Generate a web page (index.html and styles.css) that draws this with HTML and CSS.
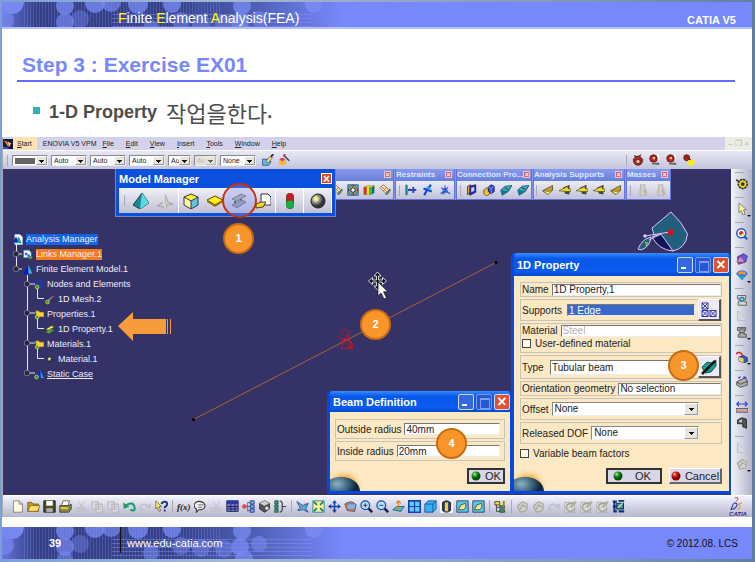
FILE: index.html
```html
<!DOCTYPE html>
<html lang="ko">
<head>
<meta charset="utf-8">
<meta name="viewport" content="width=device-width, initial-scale=1">
<title>Step 3 : Exercise EX01</title>
<link rel="stylesheet" href="styles.css">
</head>
<body>
<svg class="sprite" aria-hidden="true">
  <defs>
    <radialGradient id="gGreen" cx=".35" cy=".3"><stop offset="0" stop-color="#c8f8b0"/><stop offset=".4" stop-color="#28a828"/><stop offset="1" stop-color="#055005"/></radialGradient>
    <radialGradient id="gRed" cx=".35" cy=".3"><stop offset="0" stop-color="#ffd0c0"/><stop offset=".4" stop-color="#e02818"/><stop offset="1" stop-color="#800"/></radialGradient>
    <radialGradient id="gBall" cx=".35" cy=".35"><stop offset="0" stop-color="#ffffb0"/><stop offset=".3" stop-color="#e8e070"/><stop offset=".45" stop-color="#aaa"/><stop offset="1" stop-color="#333"/></radialGradient>
    <radialGradient id="gPlanet" cx=".4" cy=".25"><stop offset="0" stop-color="#8cb4c8"/><stop offset=".5" stop-color="#487088"/><stop offset="1" stop-color="#102838"/></radialGradient>
    <radialGradient id="gGlow"><stop offset=".4" stop-color="#f0a030"/><stop offset="1" stop-color="#fce9c4" stop-opacity="0"/></radialGradient>
    <linearGradient id="gFade"><stop offset="0" stop-color="#6474dc"/><stop offset=".1" stop-color="#343f86"/><stop offset=".5" stop-color="#343f86"/><stop offset=".75" stop-color="#5060b8"/><stop offset="1" stop-color="#7788fb"/></linearGradient>
    <pattern id="pLines" width="6" height="6" patternUnits="userSpaceOnUse"><path d="M1.500 0V6M4.500 0V6" stroke="#8c9aff" stroke-opacity=".25" fill="none"/></pattern>
    <pattern id="pRows" width="6" height="4" patternUnits="userSpaceOnUse"><path d="M0 .5H6" stroke="#8c9aff" stroke-opacity=".4" fill="none"/></pattern>
  </defs>
  <symbol id="dots" viewBox="0 0 340 32" preserveAspectRatio="xMinYMin slice">
    <rect width="340" height="32" fill="url(#gFade)"/>
    <rect x="20" width="200" height="32" fill="url(#pLines)"/>
    <rect x="110" y="12" width="200" height="20" fill="url(#pRows)"/>
    <g fill="#7788f0">
      <circle cx="10" cy="0" r="12"/><circle cx="2" cy="18" r="10" opacity=".7"/><circle cx="63" cy="4" r="9" opacity=".8"/><circle cx="63" cy="20" r="9" opacity=".7"/><circle cx="63" cy="32" r="8" opacity=".6"/><circle cx="78" cy="17" r="9" opacity=".4"/>
      <circle cx="93" cy="1" r="10" opacity=".8"/><circle cx="109" cy="0" r="10" opacity=".7"/><circle cx="136" cy="2" r="10" opacity=".8"/><circle cx="149" cy="26" r="8" opacity=".6"/><circle cx="170" cy="2" r="9" opacity=".8"/><circle cx="179" cy="19" r="9" opacity=".5"/><circle cx="199" cy="21" r="9" opacity=".5"/><circle cx="222" cy="22" r="9" opacity=".5"/>
      <circle cx="240" cy="4" r="9" opacity=".8"/><circle cx="238" cy="20" r="9" opacity=".8"/><circle cx="242" cy="32" r="9" opacity=".8"/><circle cx="257" cy="17" r="8" opacity=".6"/><circle cx="312" cy="2" r="9"/>
    </g>
  </symbol>
  <symbol id="i-app" viewBox="0 0 16 16"><path fill="#101840" d="M0 0h16v16H0z"/><path d="M1 2l8 3 2 8-4-2z" fill="#f07030"/><path d="M8 4l5 3-3 5z" fill="#ffd860"/><path d="M0 12l7 1 3 3H0z" fill="#2858c0"/></symbol>
  <symbol id="i-pyr" viewBox="0 0 16 16"><path d="M9 0L0 12l7 4 9-6z" fill="#188898" stroke="#123" stroke-width=".8"/><path d="M9 0l-2 16 9-6z" fill="#60d8e0"/></symbol>
  <symbol id="i-pyrg" viewBox="0 0 16 16"><path d="M8 1L6 9 0 13l6 1 3 2 1-4 6-1-5-2z" fill="#c8c8c4" stroke="#999" stroke-width=".8"/><path d="M8 1l-2 8 3 7" stroke="#eee" fill="none"/></symbol>
  <symbol id="i-cube" viewBox="0 0 16 16"><path d="M8 1l7 3-7 4-7-4z" fill="#ffee30"/><path d="M1 4l7 4v8l-7-4z" fill="#fff8a0"/><path d="M15 4l-7 4v8l7-4z" fill="#58c8e0"/><path d="M8 1l7 3v8l-7 4-7-4V4zM1 4l7 4 7-4M8 8v8" fill="none" stroke="#224" stroke-width=".9"/></symbol>
  <symbol id="i-shell" viewBox="0 0 16 16"><path d="M8 3l8 4-8 5-8-5z" fill="#ffee20" stroke="#554400"/><path d="M0 7l8 5 8-5v2l-8 5-8-5z" fill="#907010"/></symbol>
  <symbol id="i-beam" viewBox="0 0 16 16"><path d="M1 6l9-5 5 2-9 5z" fill="#a9b48c" stroke="#556" stroke-width=".7"/><path d="M4 8v4M10 6v3" stroke="#446" stroke-width="2"/><path d="M1 12l9-5 5 2-9 6z" fill="#8aa4a8" stroke="#556" stroke-width=".7"/></symbol>
  <symbol id="i-beamy" viewBox="0 0 16 16"><path d="M1 8l9-6 5 2-9 5z" fill="#f8e840" stroke="#442" stroke-width=".7"/><path d="M1 12l9-5 5 2-9 6z" fill="#48a848" stroke="#242" stroke-width=".7"/><path d="M5 9v3" stroke="#aa8"/></symbol>
  <symbol id="i-solid" viewBox="0 0 16 16"><path d="M6 1h7l3 3v8H6z" fill="#fff" stroke="#334"/><path d="M1 11l5-2h5l-3 5-7 1z" fill="#f8d820" stroke="#442"/></symbol>
  <symbol id="i-light" viewBox="0 0 16 16"><rect x="4" width="8" height="16" rx="4" fill="#363"/><circle cx="8" cy="4" r="3.800" fill="#d01820"/><circle cx="8" cy="11.500" r="3.800" fill="#18b040"/></symbol>
  <symbol id="i-ball" viewBox="0 0 16 16"><circle cx="8" cy="8" r="7" fill="url(#gBall)" stroke="#222"/></symbol>
  <symbol id="i-flower" viewBox="0 0 16 16"><path d="M1 1h14v14H1z" fill="#48b8c8" stroke="#247"/><circle cx="8" cy="8" r="6" fill="#f8a048" stroke="#246"/><circle cx="8" cy="8" r="3" fill="#fff" stroke="#246" stroke-width="1.500"/><path d="M8 1v4M8 11v4M1 8h4M11 8h4" stroke="#246"/></symbol>
  <symbol id="i-rain" viewBox="0 0 16 16"><path d="M1 4l4-2h10v9l-3 3H1z" fill="#1a8030"/><path d="M1 4h4v10H1z" fill="#e03020"/><path d="M5 4h3v10H5z" fill="#f8e020"/><path d="M8 4h4v10H8z" fill="#30c050"/><path d="M12 4l3-2v9l-3 3z" fill="#167"/><path d="M1 4l4-2h10l-3 2z" fill="#f8c040"/></symbol>
  <symbol id="i-net" viewBox="0 0 16 16"><path d="M1 5l5-4 9 9-4 4zM3 3l10 10M6 9l5-5" fill="#f8e8b0" stroke="#a06020"/><path d="M9 14l6-7" stroke="#268" stroke-width="2"/></symbol>
  <symbol id="i-clamp" viewBox="0 0 16 16"><path d="M2 1v14" stroke="#188" stroke-width="3"/><path d="M4 8h11M11 4v8" stroke="#1848d8" stroke-width="2.500"/><path d="M6 6l5 4" stroke="#c22"/></symbol>
  <symbol id="i-pin" viewBox="0 0 16 16"><path d="M3 15l4-8 5-6M2 6l11 4" stroke="#1848e0" stroke-width="3" fill="none"/><path d="M6 4l6 3" stroke="#4bd" stroke-width="2"/></symbol>
  <symbol id="i-axes" viewBox="0 0 16 16"><path d="M8 2v7l-6 4M8 9l7 4M3 5l9 6M12 4L5 14" stroke="#2050e0" stroke-width="1.500" fill="none"/><circle cx="8" cy="9" r="3" fill="none" stroke="#2050e0"/></symbol>
  <symbol id="i-conn" viewBox="0 0 16 16"><path d="M2 3l4-2v10l-4 3z" fill="#f8a830" stroke="#223"/><path d="M5 3l8-2v10l-8 4z" fill="#2030c8" stroke="#114"/><path d="M7 5l4-1v5l-4 2z" fill="#d8d8f8"/></symbol>
  <symbol id="i-conn2" viewBox="0 0 16 16"><path d="M1 8l4-3 4 2v6l-4 3-4-3z" fill="#f8c030" stroke="#442"/><path d="M7 4l4-3 4 2v7l-4 3-4-3z" fill="#3048d0" stroke="#114"/><path d="M7 4l4 2 4-3M11 6v7" stroke="#9af" fill="none"/></symbol>
  <symbol id="i-teal" viewBox="0 0 16 16"><path d="M1 8l6-5 9-1-5 8-8 5z" fill="#30b8d0" stroke="#145"/><path d="M1 8l9 1 6-7-5 8-8 5z" fill="#137890"/><path d="M6 5l5 2" stroke="#823" stroke-width="1.500"/></symbol>
  <symbol id="i-wedge" viewBox="0 0 16 16"><path d="M1 9l13-7v6l-6 6z" fill="#c8a020" stroke="#442"/><path d="M1 9l8 1 5-2-6 6z" fill="#fff080" stroke="#442" stroke-width=".7"/></symbol>
  <symbol id="i-wedgek" viewBox="0 0 16 16"><path d="M5 5l9-4v13l-6-1z" fill="#444"/><path d="M0 9l12-6v3l4 1v3H8z" fill="#f0d828" stroke="#442" stroke-width=".8"/></symbol>
  <symbol id="i-mass" viewBox="0 0 16 16"><path d="M5 4a3 3 0 1 1 5 0l2 4v7H4V8z" fill="#d0cfc8" stroke="#aaa79c"/><path d="M9 8l4 6" stroke="#b5b2a6" stroke-width="2"/></symbol>
  <symbol id="i-brush" viewBox="0 0 16 16"><path d="M0 7h8l4 3-3 5H1z" fill="#60b8f0" stroke="#247"/><path d="M5 10l6-7 3 2-6 7z" fill="#f8e070" stroke="#333" stroke-width=".7"/><path d="M12 4l3-4" stroke="#226" stroke-width="2.500"/></symbol>
  <symbol id="i-wand" viewBox="0 0 16 16"><circle cx="6" cy="10" r="5" fill="#f8b830"/><path d="M2 7a5 5 0 0 1 7 0l-3 3z" fill="#c83898"/><path d="M8 2l7 7" stroke="#346" stroke-width="2"/><path d="M7 3l3-3" stroke="#e22" stroke-width="2"/></symbol>
  <symbol id="i-bug" viewBox="0 0 16 16"><path d="M3 2l4 3 5-4M1 8h14" stroke="#623" stroke-width="1.500" fill="none"/><circle cx="8" cy="9" r="6" fill="#b82818" stroke="#411"/><circle cx="8" cy="10" r="3" fill="#f0b0a0" stroke="#411"/></symbol>
  <symbol id="i-bugs" viewBox="0 0 16 16"><path d="M2 1h11v7H2z" fill="#fff"/><circle cx="6" cy="6" r="5" fill="#b82818" stroke="#411"/><path d="M5 4h3v3H5z" fill="#f0c0a0"/><path d="M4 13l9-1v2z" stroke="#555" fill="#777"/></symbol>
  <symbol id="i-bugy" viewBox="0 0 16 16"><circle cx="5" cy="5" r="4" fill="#b82818" stroke="#411"/><path d="M7 8h8v7H7z" fill="#f8f010"/><path d="M1 2l10 6" stroke="#411"/></symbol>
  <symbol id="i-gear" viewBox="0 0 16 16"><circle cx="9" cy="8" r="6" fill="#e8d820" stroke="#222" stroke-width="2" stroke-dasharray="3 1"/><circle cx="9" cy="8" r="2.500" fill="#333"/><path d="M0 2l4 3" stroke="#222" stroke-width="2"/></symbol>
  <symbol id="i-cur" viewBox="0 0 16 16"><path d="M4 0v13l3-3 2 6 3-1-2-6h4z" fill="#fff8a0" stroke="#555" stroke-width=".9"/></symbol>
  <symbol id="i-zoomc" viewBox="0 0 16 16"><path d="M10 10l5 5" stroke="#1858c8" stroke-width="3"/><circle cx="7" cy="7" r="6" fill="#fff" stroke="#1858c8" stroke-width="2"/><circle cx="7" cy="7" r="3" fill="#e02828"/><path d="M6 9l4-3v4z" fill="#fd0"/></symbol>
  <symbol id="i-purple" viewBox="0 0 16 16"><path d="M2 5l8-4 5 3-2 8-10 3z" fill="#6858d8" stroke="#238"/><path d="M1 12l5-7 6 7z" fill="#b0a0f0" stroke="#d33"/></symbol>
  <symbol id="i-fan" viewBox="0 0 16 16"><path d="M0 6q8-9 16 0l-8 9z" fill="#2870e0"/><path d="M2 6q6-6 12 0l-3 2q-3-3-6 0z" fill="#f89830"/><path d="M4 9h8l-4 6z" fill="#20a8b8"/></symbol>
  <symbol id="i-scroll" viewBox="0 0 16 16"><path d="M2 2h11v4h-2v5h3v4H3v-4h2V6H2z" fill="#a8a8a8" stroke="#444"/><path d="M5 4h7M5 9h6" stroke="#333"/></symbol>
  <symbol id="i-scrollb" viewBox="0 0 16 16"><path d="M2 2h11v4h-1v5h2v4H3v-4h1V6H2z" fill="#d8d8c0" stroke="#444"/><circle cx="8" cy="7" r="3.500" fill="#2878d0"/><path d="M8 5l2 3H6z" fill="#cf4"/></symbol>
  <symbol id="i-tri" viewBox="0 0 16 16"><path d="M2 1v13h13z" fill="#d8d8e0" stroke="#b8b8b8"/></symbol>
  <symbol id="i-boxr" viewBox="0 0 16 16"><path d="M0 4q5-5 9 2" stroke="#d02020" stroke-width="2" fill="none"/><path d="M4 8l6-2 5 3v5l-5 2-6-3z" fill="#3858c8" stroke="#124"/><path d="M4 8l6 2v6l-6-3z" fill="#f8d840"/></symbol>
  <symbol id="i-print2" viewBox="0 0 16 16"><path d="M4 6l7-3 4 3v6l-9 3-5-3V8z" fill="#b0b0b0" stroke="#333"/><path d="M1 8l5 3 9-4" stroke="#333" fill="none"/><path d="M3 3l3-2M10 1l4 2" stroke="#24d" stroke-width="2"/></symbol>
  <symbol id="i-meas" viewBox="0 0 16 16"><path d="M1 4h14M4 1L1 4l3 3M12 1l3 3-3 3" stroke="#2048d0" stroke-width="1.500" fill="none"/><path d="M0 10h16v5H0z" fill="#e8a070" stroke="#2848a8"/></symbol>
  <symbol id="i-meas2" viewBox="0 0 16 16"><path d="M2 4l6-3 6 2v12l-5-2V9H2z" fill="#555" stroke="#111"/><path d="M4 5l4-2v4H4z" fill="#bcd"/></symbol>
  <symbol id="i-new" viewBox="0 0 16 16"><path d="M3 1h7l4 4v10H3z" fill="#fffbe0" stroke="#777"/><path d="M10 1v4h4" fill="none" stroke="#777"/></symbol>
  <symbol id="i-open" viewBox="0 0 16 16"><path d="M1 14V3h5l1 2h7v9z" fill="#c89820" stroke="#653"/><path d="M1 14l3-7h12l-3 7z" fill="#ffe060" stroke="#653" stroke-width=".8"/></symbol>
  <symbol id="i-save" viewBox="0 0 16 16"><path d="M1 1h14v14H1z" fill="#444d22" stroke="#111"/><path d="M4 1h8v6H4z" fill="#fff"/><path d="M4 10h8v5H4z" fill="#aaa"/></symbol>
  <symbol id="i-prt" viewBox="0 0 16 16"><path d="M5 1h8l-2 6H3z" fill="#fff" stroke="#555"/><path d="M1 7h11l3-2v6l-3 4H1z" fill="#888850" stroke="#333"/><path d="M2 10h9" stroke="#fd0" stroke-width="2"/></symbol>
  <symbol id="i-cut" viewBox="0 0 16 16"><path d="M4 1l6 10M12 1L5 11" stroke="#bab9bc"/><circle cx="4" cy="12" r="2.500" stroke="#bab9bc" fill="none"/><circle cx="11" cy="12" r="2.500" stroke="#bab9bc" fill="none"/></symbol>
  <symbol id="i-copy" viewBox="0 0 16 16"><path d="M1 2h8v9H1zM6 5h8v10H6z" fill="#d8d8dc" stroke="#b0b0b4"/><path d="M8 8h4M8 11h4" stroke="#b0b0b4"/></symbol>
  <symbol id="i-undo" viewBox="0 0 16 16"><path d="M3 7q9-6 11 1t-5 4" fill="none" stroke="#18a068" stroke-width="2.500"/><path d="M0 3l1 8 7-3z" fill="#18a068"/></symbol>
  <symbol id="i-redo" viewBox="0 0 16 16"><path d="M13 8Q5 2 2 8t4 4" fill="none" stroke="#c0c0c6" stroke-width="2"/><path d="M15 4l-1 7-6-3z" fill="#c0c0c6"/></symbol>
  <symbol id="i-what" viewBox="0 0 16 16"><path d="M1 1v10l2-2 2 5 2-1-2-5h3z" fill="#ffe860" stroke="#333" stroke-width=".7"/><path d="M8 5q1-3 4-3t3 3q0 2-3 4v1M12 12v2" fill="none" stroke="#123078" stroke-width="2.200"/></symbol>
  <symbol id="i-talk" viewBox="0 0 16 16"><path d="M8 2a6.500 5 0 1 1-2 10l-3 3V11A6 5 0 0 1 8 2z" fill="#eee" stroke="#333" stroke-width="1.300"/><path d="M5 6h7M5 9h5" stroke="#555"/></symbol>
  <symbol id="i-tab" viewBox="0 0 16 16"><path d="M1 1h14v13H1z" fill="#7880c0" stroke="#115"/><path d="M1 1h14v4H1z" fill="#2838a8"/><path d="M1 8h14M1 11h14M6 5v9M11 5v9" stroke="#115"/></symbol>
  <symbol id="i-tree" viewBox="0 0 16 16"><path d="M2 8h5M7 3v11M7 3h4M7 8h4M7 13h4" stroke="#555" fill="none"/><circle cx="3" cy="8" r="2.800" fill="#e04858"/><path d="M10 1h5v4h-5zM10 6h5v4h-5zM10 11h5v4h-5z" fill="#68a8f8" stroke="#238"/></symbol>
  <symbol id="i-dice" viewBox="0 0 16 16"><path d="M8 1l6 3v7l-6 4-6-4V4z" fill="#555" stroke="#222"/><path d="M8 1l6 3-6 3-6-3z" fill="#ccc"/><circle cx="11" cy="10" r="2" fill="#ddd"/></symbol>
  <symbol id="i-struct" viewBox="0 0 16 16"><path d="M1 1h4v4H1zM1 6h4v4H1zM1 11h4v4H1z" fill="#38a868" stroke="#244"/><path d="M7 1q4 0 3 7 1 7-3 7M10 8h5" stroke="#445" fill="none" stroke-width="1.500"/></symbol>
  <symbol id="i-fly" viewBox="0 0 16 16"><path d="M1 2l8 5 6-3-3 7 3 4-6-3-7 1 3-4z" fill="#50b8d0" stroke="#1848a0"/><path d="M3 12l9-8" stroke="#d44"/></symbol>
  <symbol id="i-fit" viewBox="0 0 16 16"><path d="M1 1h14v14H1z" fill="#f4f090" stroke="#188"/><path d="M2 2l4 4M14 2l-4 4M2 14l4-4M14 14l-4-4" stroke="#187878" stroke-width="2"/></symbol>
  <symbol id="i-pan" viewBox="0 0 16 16"><path d="M8 0l3 4H9v3h3V5l4 3-4 3V9H9v3h2l-3 4-3-4h2V9H4v2L0 8l4-3v2h3V4H5z" fill="#1848a8"/></symbol>
  <symbol id="i-rot" viewBox="0 0 16 16"><path d="M1 5q8-6 14 1l-2 8-9-1z" fill="#78b8e8" stroke="#248"/><path d="M14 10a6 4 0 1 1-2-5" fill="none" stroke="#d06838" stroke-width="2"/></symbol>
  <symbol id="i-zin" viewBox="0 0 16 16"><path d="M10 10l5 5" stroke="#124" stroke-width="3"/><circle cx="6.500" cy="6.500" r="5.300" fill="#b8e0ff" stroke="#1848a8" stroke-width="1.500"/><path d="M4 6.500h5M6.500 4v5" stroke="#124"/></symbol>
  <symbol id="i-zout" viewBox="0 0 16 16"><path d="M10 10l5 5" stroke="#124" stroke-width="3"/><circle cx="6.500" cy="6.500" r="5.300" fill="#b8e0ff" stroke="#1848a8" stroke-width="1.500"/><path d="M4 6.500h5" stroke="#124"/></symbol>
  <symbol id="i-norm" viewBox="0 0 16 16"><path d="M1 12l5-4h9l-4 6z" fill="#58b8c8" stroke="#156"/><path d="M8 11V2M5 4l3-3 3 3" stroke="#c83" stroke-width="1.500" fill="none"/></symbol>
  <symbol id="i-multi" viewBox="0 0 16 16"><path d="M1 1h14v14H1z" fill="#58d0f8" stroke="#1840b0" stroke-width="2"/><path d="M8 1v14M1 8h14" stroke="#1840b0" stroke-width="1.500"/></symbol>
  <symbol id="i-iso" viewBox="0 0 16 16"><path d="M1 5l4-4h10v10l-4 4H1z" fill="#38b0f0" stroke="#1050a8"/><path d="M1 5h10v10M11 5l4-4" stroke="#1050a8" fill="none"/></symbol>
  <symbol id="i-cyl" viewBox="0 0 16 16"><rect width="16" height="16" rx="2" fill="#f8f8f8"/><path d="M3 3q5-4 10 0v10q-5 4-10 0z" fill="#283878" stroke="#112"/><path d="M6 3h4v11H6z" fill="#f8d020"/></symbol>
  <symbol id="i-view" viewBox="0 0 16 16"><path d="M1 1h14v14H1z" fill="#58c8e8" stroke="#236"/><path d="M3 12l3-6 6-2v5l-3 3z" fill="#f0e890" stroke="#442"/></symbol>
  <symbol id="i-cat" viewBox="0 0 16 16"><path d="M1 2h6v4H1z" fill="#f8e030" stroke="#333"/><path d="M3 6v8h4M3 9h4" fill="none" stroke="#333"/><path d="M7 7h6v3H7zM7 12h6v3H7z" fill="#38a868" stroke="#333"/><path d="M12 1v8" stroke="#a80" stroke-width="2.500"/></symbol>
  <symbol id="i-off" viewBox="0 0 16 16"><path d="M2 7l6-5 6 3-1 8-8 2z" fill="#d2d2cc" stroke="#aaa89c" stroke-width="1.500"/><path d="M5 12l3-6 5 3" fill="none" stroke="#aaa89c" stroke-width="1.500"/></symbol>
  <symbol id="i-offa" viewBox="0 0 16 16"><path d="M1 3h12v12H1z" fill="#d8d8d4" stroke="#b0aea4"/><path d="M12 6a5 5 0 1 0 1 4M8 9l7-7" fill="none" stroke="#a9a79c" stroke-width="2"/></symbol>
  <symbol id="i-end" viewBox="0 0 16 16"><path d="M1 2h5M1 8h5M3 2v12h3M8 1h7M8 14h7" stroke="#123078" stroke-width="2.500" fill="none"/><path d="M6 4h8v7H6z" fill="#38a8b0" stroke="#112a70" stroke-width="1.500"/><path d="M7 10l6-6" stroke="#e8e060" stroke-width="1.500"/></symbol>
  <symbol id="i-folder" viewBox="0 0 16 16"><path d="M2 2h6l1 2h7v8H4z" fill="#f8d030" stroke="#553"/><circle cx="5" cy="12" r="3" fill="#6c8c20" stroke="#cf6"/></symbol>
  <symbol id="i-link" viewBox="0 0 16 16"><path d="M1 1h9l3 4v8H1z" fill="#fff" stroke="#28a"/><path d="M3 5h4v4H3zM7 8h4v4H7z" fill="#2870c8"/><circle cx="12" cy="13" r="2.500" fill="#5a9828"/></symbol>
  <symbol id="i-doc" viewBox="0 0 16 16"><path d="M3 0h8l4 4v12H3z" fill="#fff" stroke="#bdf"/><path d="M9 3L2 14h12z" fill="#20a0a8"/><path d="M5 3L0 12h8z" fill="#1020d0"/></symbol>
  <symbol id="i-fem" viewBox="0 0 16 16"><path d="M8 0L1 15h8z" fill="#0818e0"/><path d="M8 0l7 14-6 1z" fill="#28b8d8"/></symbol>
  <symbol id="i-nodes" viewBox="0 0 16 16"><path d="M1 2l5 2 5-3 4 4-5 3 4 6-8-2z" fill="none" stroke="#1838e0" stroke-width="2" stroke-dasharray="2 1"/><circle cx="5" cy="12" r="3" fill="#5a8820" stroke="#cf6"/></symbol>
  <symbol id="i-mesh" viewBox="0 0 16 16"><path d="M3 13L14 2" stroke="#d84040" stroke-width="2"/><path d="M5 9l6-5" stroke="#48f" stroke-width="2"/><circle cx="4" cy="12" r="3" fill="#5a8820" stroke="#cf6"/></symbol>
  <symbol id="i-static" viewBox="0 0 16 16"><path d="M10 1L3 14h13z" fill="#1028d0"/><path d="M10 1l6 13h-5z" fill="#2898c8"/><circle cx="4" cy="12" r="3" fill="#5a8820" stroke="#cf6"/></symbol>
  <symbol id="i-net3" viewBox="0 0 16 16"><path d="M1 1h6v6H1zM1 8.500h6v6H1zM9 8.500h6v6H9zM1 1l6 6M7 1L1 7M1 8.500l6 6M7 8.500l-6 6M9 8.500l6 6M15 8.500l-6 6" fill="none" stroke="#2020a0" stroke-width=".9"/></symbol>
  <symbol id="i-sect" viewBox="0 0 16 16"><path d="M1 8l5-5 5 1 4-3v6l-5 6-6 1z" fill="#18a090" stroke="#023" stroke-width=".7"/><path d="M1 15L14 2" stroke="#111" stroke-width="2.500"/></symbol>
</svg>

<header class="banner">
  <svg class="texture" aria-hidden="true"><use href="#dots"/></svg>
  <p class="course"><b>F</b>inite <b>E</b>lement <b>A</b>nalysis(FEA)</p>
  <p class="product">CATIA V5</p>
</header>

<main>
  <section class="lesson">
    <h1>Step 3 : Exercise EX01</h1>
    <ul class="points"><li>1-D Property <span>작업을한다</span>.</li></ul>
  </section>

  <section class="app">
    <nav class="menubar">
      <svg class="appicon" aria-hidden="true"><use href="#i-app"/></svg>
      <a class="start" href="#"><u>S</u>tart</a><a href="#">ENOVIA V5 VPM</a><a href="#"><u>F</u>ile</a><a href="#"><u>E</u>dit</a><a href="#"><u>V</u>iew</a><a href="#"><u>I</u>nsert</a><a href="#"><u>T</u>ools</a><a href="#"><u>W</u>indow</a><a href="#"><u>H</u>elp</a>
      <span class="mdi">– ❐ ×</span>
    </nav>
    <div class="optbar">
      <i class="grip"></i>
      <label class="combo wide swatch"><select aria-label="Color"><option></option></select></label>
      <label class="combo wide"><select aria-label="Transparency"><option>Auto</option></select></label>
      <label class="combo wide"><select aria-label="Line weight"><option>Auto</option></select></label>
      <label class="combo wide"><select aria-label="Line type"><option>Auto</option></select></label>
      <label class="combo narrow"><select aria-label="Point"><option>Aut</option></select></label>
      <label class="combo narrow off"><select aria-label="Rendering" disabled><option>Aut</option></select></label>
      <label class="combo wide"><select aria-label="Layer"><option>None</option></select></label>
      <span class="tools"><svg><use href="#i-brush"/></svg><svg><use href="#i-wand"/></svg></span>
      <span class="tools far"><i class="grip"></i><svg><use href="#i-bug"/></svg><svg><use href="#i-bugs"/></svg><svg><use href="#i-bugs"/></svg><svg><use href="#i-bugy"/></svg></span>
    </div>

    <div class="work">
      <div class="view">
        <svg class="scene" viewBox="3 169 729 326" aria-hidden="true">
          <path d="M193.500 419.500L496 262.500" stroke="#b0602e" stroke-width="1"/>
          <circle cx="193.500" cy="419.500" r="1.500"/><circle cx="496" cy="262.500" r="1.500"/>
          <path d="M340 333a5 5 0 1 1 7 6M338 336l14 13M341 349l6-15 6 13zM352 351v-8l-10-5M341 343a5 5 0 1 1 6 6" fill="none" stroke="#e01018" stroke-width=".8"/>
          <path d="M671 212Q682 222 687.500 234Q686 248 673 251Q655 246 652 228Z" fill="#235f7c" stroke="#d8c8ff" stroke-width="1"/>
          <path d="M661 234L673 251Q659 250 652 237Z" fill="#141458" stroke="#d8c8ff" stroke-width="1"/>
          <path d="M638 249Q642 239 651 237Q650 247 641 250Z" fill="#235f7c" stroke="#d8c8ff"/><path d="M645 236l25-4M661 234l-12 6" stroke="#d8c8ff"/><circle cx="645" cy="236" r="1.800" fill="#d8c8ff"/><path d="M668 230h5v5h-5z" fill="#d81010"/><path d="M645 243q4-2 1 3" stroke="#dd3" fill="none"/>
          <path d="M16.500 240V269M16 254h6M16 269h6M27.500 275V373M27 284h8M27 313h8M27 343h8M27 373h8M37.500 288V298.500H44M37.500 318V328.500H44M37.500 348V358.500H44" stroke="#e8e8f4" fill="none"/>
          <g fill="#26263a" stroke="#889" stroke-width=".8"><circle cx="16" cy="254" r="2.800"/><circle cx="16" cy="269" r="2.800"/><circle cx="27" cy="284" r="2.800"/><circle cx="27" cy="313" r="2.800"/><circle cx="27" cy="343" r="2.800"/><circle cx="27" cy="373" r="2.800"/></g>
          <path d="M118 326l15-14v7h33v15h-33v7z" fill="#f79c3a"/><path d="M167.500 319v15M170.500 319v15" stroke="#f79c3a" stroke-width="1"/>
          <g fill="#111" stroke="#fff" stroke-width=".8"><path d="M377.500 272l3.500 4h-2.500v4h4v-2.500l4 3.500-4 3.500v-2.500h-4v4h2.500l-3.500 4-3.500-4h2.500v-4h-4v2.500l-4-3.500 4-3.500v2.500h4v-4h-2.500z"/></g>
          <path d="M378 282v14l3-3 3 6 2.500-1.200-3-6h4.500z" fill="#fff" stroke="#111" stroke-width=".7"/>
        </svg>

        <ul class="tree">
          <li class="l0"><svg><use href="#i-doc"/></svg><span class="sel">Analysis Manager</span></li>
          <li class="l1"><svg><use href="#i-link"/></svg><span class="hot">Links Manager.1</span></li>
          <li class="l1"><svg><use href="#i-fem"/></svg><span>Finite Element Model.1</span></li>
          <li class="l2"><svg><use href="#i-nodes"/></svg><span>Nodes and Elements</span></li>
          <li class="l3"><svg><use href="#i-mesh"/></svg><span>1D Mesh.2</span></li>
          <li class="l2"><svg><use href="#i-folder"/></svg><span>Properties.1</span></li>
          <li class="l3"><svg><use href="#i-beamy"/></svg><span>1D Property.1</span></li>
          <li class="l2"><svg><use href="#i-folder"/></svg><span>Materials.1</span></li>
          <li class="l3"><svg class="small"><use href="#i-ball"/></svg><span>Material.1</span></li>
          <li class="l2"><svg><use href="#i-static"/></svg><span><u>Static Case</u></span></li>
        </ul>

        <div class="palettes">
          <section class="palette p-first"><h2><button aria-label="Close">×</button></h2><div><svg><use href="#i-net"/></svg><svg><use href="#i-flower"/></svg><svg><use href="#i-rain"/></svg><svg><use href="#i-net"/></svg></div></section>
          <section class="palette p-rest"><h2><span>Restraints</span><button aria-label="Close">×</button></h2><div><i class="grip"></i><svg><use href="#i-clamp"/></svg><svg><use href="#i-pin"/></svg><svg><use href="#i-axes"/></svg></div></section>
          <section class="palette p-conn"><h2><span>Connection Pro...</span><button aria-label="Close">×</button></h2><div><i class="grip"></i><svg><use href="#i-conn"/></svg><svg><use href="#i-conn2"/></svg><svg><use href="#i-teal"/></svg><svg><use href="#i-teal"/></svg></div></section>
          <section class="palette p-supp"><h2><span>Analysis Supports</span><button aria-label="Close">×</button></h2><div><i class="grip"></i><svg><use href="#i-wedge"/></svg><svg><use href="#i-wedgek"/></svg><svg><use href="#i-wedgek"/></svg><svg><use href="#i-wedgek"/></svg><svg><use href="#i-wedge"/></svg></div></section>
          <section class="palette p-mass"><h2><span>Masses</span><button aria-label="Close">×</button></h2><div><i class="grip"></i><svg><use href="#i-mass"/></svg><svg><use href="#i-mass"/></svg></div></section>
        </div>

        <section class="manager">
          <h2><span>Model Manager</span><button class="x" aria-label="Close">×</button></h2>
          <div class="mtools">
            <span class="c1"><i class="grip"></i><svg><use href="#i-pyr"/></svg><svg><use href="#i-pyrg"/></svg></span>
            <span class="c2"><svg><use href="#i-cube"/></svg><svg><use href="#i-shell"/></svg><svg><use href="#i-beam"/></svg><svg><use href="#i-solid"/></svg></span>
            <span class="c3"><svg><use href="#i-light"/></svg></span>
            <span class="c3"><svg><use href="#i-ball"/></svg></span>
          </div>
          <i class="ring"></i>
        </section>

        <form class="dialog beam">
          <h2><span>Beam Definition</span><button type="button" aria-label="Minimize" class="min"></button><button type="button" aria-label="Maximize" class="max"></button><button type="button" class="x" aria-label="Close">×</button></h2>
          <div class="body">
            <svg class="planet" viewBox="0 0 34 24" aria-hidden="true"><ellipse cx="14" cy="18" rx="20" ry="17" fill="url(#gGlow)"/><ellipse cx="11" cy="24" rx="19" ry="14" fill="url(#gPlanet)"/></svg>
            <p class="row"><label for="or">Outside radius</label><input id="or" value="40mm"></p>
            <p class="row"><label for="ir">Inside radius</label><input id="ir" value="20mm"></p>
            <p class="actions"><button type="button" class="ok slim"><svg viewBox="0 0 10 10"><circle cx="5" cy="5" r="4.500" fill="url(#gGreen)"/></svg>OK</button></p>
          </div>
        </form>

        <form class="dialog prop">
          <h2><span>1D Property</span><button type="button" aria-label="Minimize" class="min"></button><button type="button" aria-label="Maximize" class="max"></button><button type="button" class="x" aria-label="Close">×</button></h2>
          <div class="body">
            <svg class="planet" viewBox="0 0 34 24" aria-hidden="true"><ellipse cx="14" cy="18" rx="20" ry="17" fill="url(#gGlow)"/><ellipse cx="11" cy="24" rx="19" ry="14" fill="url(#gPlanet)"/></svg>
            <p class="row"><label for="nm">Name</label><input id="nm" value="1D Property,1"></p>
            <p class="row mid"><label for="sp" class="pad">Supports</label><input id="sp" class="picked" value="1 Edge"><button type="button" class="tool" aria-label="Mesh supports"><svg><use href="#i-net3"/></svg></button></p>
            <div class="row stack">
              <p><label for="mt">Material</label><input id="mt" value="Steel" disabled></p>
              <p class="check"><input type="checkbox" id="ud"><label for="ud">User-defined material</label></p>
            </div>
            <p class="row tall"><label for="ty" class="type">Type</label><input id="ty" class="roomy" value="Tubular beam"><button type="button" class="tool" aria-label="Section"><svg><use href="#i-sect"/></svg></button></p>
            <p class="row"><label for="og">Orientation geometry</label><input id="og" value="No selection"></p>
            <p class="row mid"><label for="of">Offset</label><span class="combo big"><select id="of"><option>None</option></select></span></p>
            <p class="row mid"><label for="rd">Released DOF</label><span class="combo big"><select id="rd"><option>None</option></select></span></p>
            <p class="check last"><input type="checkbox" id="vb"><label for="vb">Variable beam factors</label></p>
            <p class="actions"><button type="button" class="ok"><svg viewBox="0 0 10 10"><circle cx="5" cy="5" r="4.500" fill="url(#gGreen)"/></svg><span>OK</span></button><button type="button" class="cancel"><svg viewBox="0 0 10 10"><circle cx="5" cy="5" r="4.500" fill="url(#gRed)"/></svg>Cancel</button></p>
          </div>
        </form>

        <b class="badge b1">1</b><b class="badge b2">2</b><b class="badge b3">3</b><b class="badge b4">4</b>
      </div>

      <aside class="side">
        <span><svg><use href="#i-gear"/></svg></span>
        <span class="m"><svg><use href="#i-cur"/></svg></span>
        <span><svg><use href="#i-zoomc"/></svg></span>
        <span class="m"><svg><use href="#i-purple"/></svg><svg><use href="#i-fan"/></svg></span>
        <span class="m"><svg><use href="#i-scrollb"/></svg><svg><use href="#i-tri"/></svg><svg><use href="#i-scroll"/></svg></span>
        <span class="m"><svg><use href="#i-boxr"/></svg></span>
        <span><svg><use href="#i-print2"/></svg></span>
        <span><svg><use href="#i-meas"/></svg><svg><use href="#i-meas2"/></svg></span>
        <span class="m"><svg><use href="#i-tri"/></svg><svg><use href="#i-off"/></svg></span>
      </aside>
    </div>

    <div class="dock">
      <span><svg><use href="#i-new"/></svg><svg><use href="#i-open"/></svg><svg><use href="#i-save"/></svg><svg><use href="#i-prt"/></svg><svg><use href="#i-cut"/></svg><svg><use href="#i-copy"/></svg><svg><use href="#i-copy"/></svg><svg><use href="#i-undo"/></svg><svg><use href="#i-redo"/></svg><svg><use href="#i-what"/></svg></span>
      <span><em>f(x)</em><svg><use href="#i-talk"/></svg><svg><use href="#i-cut"/></svg><svg><use href="#i-tab"/></svg><svg><use href="#i-tree"/></svg><svg><use href="#i-dice"/></svg><svg><use href="#i-struct"/></svg></span>
      <span><svg><use href="#i-fly"/></svg><svg><use href="#i-fit"/></svg><svg><use href="#i-pan"/></svg><svg><use href="#i-rot"/></svg><svg><use href="#i-zin"/></svg><svg><use href="#i-zout"/></svg><svg><use href="#i-norm"/></svg><svg><use href="#i-multi"/></svg><svg><use href="#i-iso"/></svg><svg><use href="#i-cyl"/></svg><svg><use href="#i-view"/></svg><svg><use href="#i-view"/></svg></span>
      <span><svg><use href="#i-cat"/></svg></span>
      <span><svg><use href="#i-off"/></svg><svg><use href="#i-off"/></svg><svg><use href="#i-redo"/></svg><svg><use href="#i-offa"/></svg><svg><use href="#i-offa"/></svg><svg><use href="#i-offa"/></svg><svg><use href="#i-end"/></svg></span>
      <div class="brand"><svg viewBox="0 0 20 18" aria-hidden="true"><path d="M6 1q6-1 3 3l-2 2" stroke="#d83030" fill="none" stroke-width="1.200"/><path d="M4 8q7-1 4 4-2 4-7 4L4 9" stroke="#2838a0" fill="none" stroke-width="1.400"/><path d="M15 8q-5 0-3 3t-3 5" stroke="#f0a020" fill="none" stroke-width="1.600"/></svg><b>CATIA</b></div>
    </div>
  </section>
</main>

<footer class="banner foot">
  <svg class="texture" aria-hidden="true"><use href="#dots"/></svg>
  <b class="page">39</b>
  <a href="#">www.edu-catia.com</a>
  <p class="copy">© 2012.08. LCS</p>
</footer>
</body>
</html>
```
FILE: styles.css
```css
* { box-sizing: border-box; }
body {
  margin: 0;
  min-height: 100vh;
  padding: 2px 3px 3px 2px;
  display: flex;
  flex-direction: column;
  background: linear-gradient(90deg, #7b9fd6, #a4b8d4 30%, #7d95b8 80%, #5f7da4);
  font-family: "Liberation Sans", "Noto Sans CJK KR", sans-serif;
}
h1, h2, p, ul { margin: 0; padding: 0; }
ul { list-style: none; }
a { color: inherit; text-decoration: none; }
button, input, select { font: inherit; color: inherit; margin: 0; padding: 0; border-radius: 0; }
.sprite { position: absolute; width: 0; height: 0; }

/* Slide banners */
.banner {
  position: relative;
  height: 27px;
  display: flex;
  align-items: center;
  background: #7788fb;
  border-bottom: 2px solid #b8c0ff;
  overflow: hidden;
}
.texture { position: absolute; left: 0; top: 0; width: 340px; height: 32px; }
.banner p, .banner a, .banner b { position: relative; color: #fff; }
.course { flex: 1; padding: 6px 0 0 116px; font-size: 14px; line-height: 16px; }
.banner .course b { color: #ff0; font-weight: 400; }
.product { padding: 10px 16px 0 0; font: bold 11px/12px "Liberation Sans", sans-serif; }
.foot { height: 32px; border: 0; flex: none; }
.foot .page { width: 119px; padding-left: 47px; font-size: 11px; }
.foot .page::after { content: ""; position: absolute; right: 0; top: -10px; height: 26px; border-left: 1px solid #111; }
.foot a { padding-left: 6px; font-size: 11px; }
.banner .copy { margin-left: auto; padding-right: 14px; font-size: 10px; color: #111; }

main { flex: 1; display: flex; flex-direction: column; background: #fff; padding-bottom: 10px; }
.lesson { padding: 24px 17px 0 15px; height: 108px; }
h1 { padding: 0 0 3px 5px; font-size: 21px; line-height: 24px; color: #7788fb; border-bottom: 2px solid #66f; }
.points li { display: flex; align-items: center; padding: 17px 0 0 16px; font-size: 18px; font-weight: 700; line-height: 26px; color: #4d4d4d; }
.points li::before { content: ""; width: 7px; height: 7px; margin: -4px 9px 0 0; background: #2cb5b0; }
.points span { margin-left: 9px; font: 400 22px/26px "Noto Sans CJK KR", sans-serif; }

/* CAD window */
.app { flex: 1; display: flex; flex-direction: column; border-left: 1px solid #aaa; font-size: 8px; color: #222; }
.menubar { display: flex; align-items: center; height: 13px; background: #d3d2ea; font-size: 7px; line-height: 13px; }
.appicon { width: 10px; height: 10px; }
.menubar .start { background: #fde3b4; padding: 0 5px 0 4px; margin-right: 6px; }
.menubar a { margin-right: 6px; }
.menubar a:nth-of-type(n+3) { margin-right: 12px; }
.mdi { margin-left: auto; padding: 0 3px; background: #ecebe4; color: #b5b3ac; font-size: 8px; }
.optbar { display: flex; align-items: center; height: 19px; border-top: 1px solid #fff; background: linear-gradient(#e8e8f4, #c4c4de); }
.grip { width: 1px; height: 11px; background: #aaa9bc; border-right: 0; flex: none; }
.optbar > .grip { margin: 0 4px; }
.combo { position: relative; display: block; height: 11px; margin-right: 3px; background: #fff; border: 1px solid #888; border-right-color: #eee; border-bottom-color: #eee; }
.combo select { display: block; width: 100%; height: 100%; border: 0; padding-left: 2px; background: none; appearance: none; font-size: 7px; line-height: 9px; opacity: 1; }
.combo::after { content: ""; position: absolute; right: 0; top: 0; bottom: 0; width: 9px; pointer-events: none; border: 1px solid #999; border-top-color: #fff; border-left-color: #fff; background: linear-gradient(#111, #111) 50% 3px / 5px 1px no-repeat, linear-gradient(#111, #111) 50% 4px / 3px 1px no-repeat, linear-gradient(#111, #111) 50% 5px / 1px 1px no-repeat, #e8e6dc; }
.wide { width: 36px; }
.narrow { width: 23px; }
.off { background: #e4e2da; color: #bbb; }
.off::after { opacity: .6; }
.swatch { background: linear-gradient(#666, #666) 2px 2px / 20px 6px no-repeat, #fff; }
.tools { display: flex; align-items: center; gap: 4px; padding-left: 3px; }
.tools svg { width: 12px; height: 12px; }
.far { margin-left: auto; padding-right: 57px; gap: 5px; }
.work { flex: 1; display: flex; }
.view { flex: 1; position: relative; min-height: 326px; background: #343266; overflow: hidden; }
.scene { position: absolute; left: 0; top: 0; width: 729px; height: 326px; }
.side { width: 21px; background: linear-gradient(90deg, #f4f4fa, #d4d4e6 50%, #b4b4c8); padding-top: 3px; }
.side span { position: relative; display: flex; flex-direction: column; align-items: center; gap: 4px; padding: 6px 0 7px; }
.side span::before { content: ""; position: absolute; left: 4px; top: 0; width: 9px; height: 1px; background: #aaa; }
.side svg { width: 12px; height: 12px; }
.m::after { content: ""; position: absolute; right: 1px; bottom: 5px; border: 2px solid transparent; border-top-color: #111; border-bottom: 0; }
.dock { display: flex; align-items: center; height: 22px; background: linear-gradient(#f4f4fa, #d6d6e8 45%, #b8b8cc); padding-left: 8px; border-top: 1px solid #fff; }
.dock span { display: flex; align-items: center; gap: 3px; margin-right: 4px; }
.dock span + span { border-left: 1px solid #aaa; padding-left: 4px; }
.dock svg { width: 13px; height: 13px; flex: none; }
.dock em { font: italic bold 9px/12px "Liberation Serif", serif; width: 14px; }
.dock .brand { margin-left: auto; width: 28px; display: flex; flex-direction: column; align-items: center; font: italic bold 6px/6px "Liberation Sans", sans-serif; color: #2a2f88; }
.brand svg { width: 18px; height: 14px; }

/* Specification tree */
.tree { position: absolute; left: 10px; top: 63px; color: #eef; font-size: 9px; }
.tree li { display: flex; align-items: center; height: 15px; }
.tree svg { width: 10px; height: 11px; margin-right: 3px; }
.tree span { line-height: 11px; }
.tree .small { padding: 2px; }
.l1 { padding-left: 10px; }
.l2 { padding-left: 21px; }
.l3 { padding-left: 32px; }
.sel { background: #1464e8; }
.hot { background: #f47a1c; }

/* Docked palettes */
.palettes { position: absolute; left: 324px; top: -1px; display: flex; }
.palette { padding: 0 1px 1px; background: #6474dc; border-left: 1px solid #8494f0; }
.palette h2 { display: flex; align-items: center; height: 13px; padding: 0 2px 0 0; background: linear-gradient(#8a9cf0, #6880d8); color: #dfe6ff; font-size: 8px; white-space: nowrap; }
.palette button { margin-left: auto; flex: none; width: 7px; height: 7px; border: 1px solid #e8c8d0; background: #c85c70; color: #fff; font-size: 7px; line-height: 5px; }
.palette div { display: flex; align-items: center; justify-content: space-around; height: 18px; background: linear-gradient(#ececf6, #c2c2d8); }
.palette svg { width: 12px; height: 12px; }
.p-first { width: 67px; }
.p-rest { width: 61px; }
.p-conn { width: 77px; }
.p-supp { width: 93px; }
.p-mass { width: 46px; }

/* Model Manager */
.manager { position: absolute; left: 112px; top: -1px; width: 221px; padding: 1px 3px 3px; background: #0a50dc; border: 1px solid #7888b0; border-top: 0; }
.manager h2 { display: flex; align-items: center; height: 19px; color: #fff; font-size: 11px; }
.x { margin-left: auto; width: 11px; height: 11px; border: 1px solid #fff; background: #e0482c; color: #fff; font: bold 12px/8px "Liberation Sans", sans-serif; }
.mtools { display: flex; height: 25px; background: linear-gradient(#f0f0f8, #c0c0d4); }
.mtools span { display: flex; align-items: center; border-right: 1px solid #fff; }
.mtools svg { width: 16px; height: 16px; }
.c1 { padding: 0 5px; gap: 8px; }
.c2 { flex: 1; justify-content: space-between; padding: 0 4px; }
.c3 { width: 28px; justify-content: center; }
.ring { position: absolute; left: 106px; top: 15px; width: 35px; height: 35px; border: 2px solid #c83010; border-radius: 50%; background: rgba(140, 150, 240, .35); }

/* Dialogs */
.dialog { position: absolute; border: 3px solid #0848dc; border-top: 0; border-radius: 4px 4px 0 0; background: #0848dc; font-size: 10px; color: #222; }
.dialog h2 { display: flex; align-items: center; gap: 2px; padding-left: 3px; background: linear-gradient(#3a8cff, #0858e8 25%, #0a5cf0 80%, #0448c8); color: #fff; font-size: 11px; border-radius: 3px 3px 0 0; }
.dialog h2 span { flex: 1; }
.dialog h2 button { position: relative; width: 16px; height: 16px; border: 1px solid #d0dcff; border-radius: 2px; background: #3468e0; }
.dialog h2 .x { background: #e0522c; font-size: 16px; line-height: 12px; }
.dialog h2 .max { background: #2458d8; border-color: #7898ec; }
.min::after { content: ""; position: absolute; left: 3px; bottom: 3px; width: 5px; height: 2px; background: #fff; }
.max::after { content: ""; position: absolute; left: 3px; top: 3px; width: 8px; height: 8px; border: 1px solid #7f9cf0; border-top-width: 2px; }
.body { position: relative; display: flex; flex-direction: column; background: #fce9c4; }
.planet { position: absolute; left: 0; bottom: 0; width: 34px; height: 24px; }
.row { display: flex; align-items: center; border: 1px solid #c6c3bc; padding-left: 1px; }
.row label { white-space: nowrap; margin-right: 3px; }
.dialog input:not([type]) { flex: 1; min-width: 0; height: 12px; padding-left: 1px; border: 1px solid #777; border-right-color: #eee; border-bottom-color: #eee; background: #fff; line-height: 10px; }
.dialog input:disabled { color: #b4b4b4; }
.beam { left: 324px; top: 222px; width: 186px; }
.beam h2 { height: 21px; }
.beam .body { padding: 7px 5px 7px; gap: 2px; height: 79px; }
.beam .row { height: 20px; padding-right: 4px; }
.prop { left: 508px; top: 84px; width: 221px; }
.prop h2 { height: 23px; }
.prop .body { padding: 6px 7px 7px 6px; gap: 2px; height: 215px; }
.prop .row { height: 15px; flex: none; }
.prop .tall { height: 24px; }
.prop .mid { height: 22px; }
.prop .stack { display: block; height: 30px; }
.stack p { display: flex; align-items: center; height: 13px; }
.pad { width: 42px; }
.type { width: 25px; }
.dialog .body .picked { background: #3868c8; color: #fff; }
.dialog .body .roomy { height: 15px; }
.tool { width: 23px; height: 22px; margin-left: 3px; border: 1px solid #fff; border-right: 2px solid #555; border-bottom: 2px solid #555; background: #ecebf4; }
.tool svg { display: block; width: 16px; height: 16px; margin: auto; }
.check { display: flex; align-items: center; gap: 4px; height: 14px; }
.check input { appearance: none; width: 9px; height: 9px; border: 1px solid #444; background: #fffbea; }
.combo.big { flex: 1; height: 14px; margin-right: 22px; }
.big select { font-size: 10px; line-height: 12px; }
.big::after { width: 12px; background-position: 50% 4px, 50% 5px, 50% 6px, 0 0; }
.actions { display: flex; justify-content: flex-end; gap: 7px; margin-top: auto; }
.actions button { display: flex; align-items: center; justify-content: center; gap: 4px; height: 16px; width: 53px; border: 1px solid #fff; border-right: 2px solid #666; border-bottom: 2px solid #666; background: #d8d6e8; font-size: 11px; line-height: 12px; white-space: nowrap; }
.actions svg { width: 10px; height: 10px; flex: none; }
.actions .ok { width: 56px; border: 2px solid #333; }
.ok span { padding: 0 4px 0 8px; }
.actions .slim { width: 38px; }

/* Step markers */
.badge { position: absolute; width: 31px; height: 31px; border: 2px solid #c86c10; border-radius: 50%; background: #f8962c; color: #fff; font-size: 11px; line-height: 27px; text-align: center; }
.b1 { left: 220px; top: 54px; }
.b2 { left: 357px; top: 140px; }
.b3 { left: 665px; top: 181px; }
.b4 { left: 433px; top: 259px; }
```
